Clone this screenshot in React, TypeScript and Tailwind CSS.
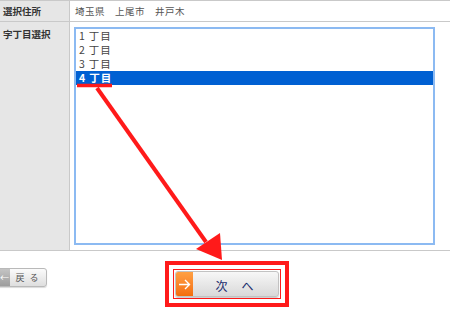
import React from "react";

const jp = { fontFamily: '"Noto Sans CJK JP", "Noto Sans", sans-serif' };

export default function App() {
  const items = ["1丁目", "2丁目", "3丁目", "4丁目"];
  const selected = 3;

  return (
    <div className="relative w-[450px] h-[325px] bg-white overflow-hidden" style={jp}>
      {/* Table */}
      <div className="border-t border-b border-[#c9c9c9]">
        <div className="grid grid-cols-[70px_1fr] h-[21px] border-b border-[#c9c9c9]">
          <div className="bg-[#e6e6e6] border-r border-[#c9c9c9] px-[3px] text-[9.5px] font-bold text-[#333] leading-[20px]">
            選択住所
          </div>
          <div className="pl-[5px] text-[9.5px] text-[#555] leading-[20px] tracking-[0.5px]">
            埼玉県　上尾市　井戸木
          </div>
        </div>
        <div className="grid grid-cols-[70px_1fr] h-[228px]">
          <div className="bg-[#e6e6e6] border-r border-[#c9c9c9] px-[3px] pt-[5px] text-[9.5px] font-bold text-[#333]">
            字丁目選択
          </div>
          <div className="pl-[4px] pr-[15px] pt-[5px] pb-[5px]">
            <div className="h-full border-2 border-[#8cbaf2] bg-white">
              {items.map((it, i) => (
                <div
                  key={it}
                  className={`h-[14px] pl-[3px] text-[10.5px] leading-[14px] tracking-[1px] overflow-hidden ${
                    i === selected ? "bg-[#0060d2] text-white font-bold" : "text-[#444]"
                  }`}
                >
                  <span className="mr-[3px]">{it.slice(0, 1)}</span>
                  {it.slice(1)}
                </div>
              ))}
            </div>
          </div>
        </div>
      </div>

      {/* Footer buttons */}
      <div className="relative h-[75px]">
        <button className="absolute left-[-4px] top-[17px] w-[51px] h-[19px] rounded-[3px] border border-[#b9b9b9] bg-gradient-to-b from-[#fbfbfb] to-[#dedede] flex items-center overflow-hidden shadow-[0_1px_1px_rgba(0,0,0,0.15)]">
          <span className="w-[13px] h-full bg-gradient-to-b from-[#c4c4c4] to-[#9d9d9d] text-white text-[9px] leading-[17px] text-right pr-[1px]">←</span>
          <span className="flex-1 text-[9px] text-[#555] tracking-[5px] pl-[3px]">戻る</span>
        </button>

        <div className="absolute left-[165px] top-[10px] w-[124px] h-[46px] border-[4px] border-[#ff1a1a] p-[4px]">
          <div className="w-full h-full border border-[#ff1a1a] p-[1px]">
            <button className="w-full h-full rounded-[3px] border border-[#c2c2c2] bg-gradient-to-b from-[#f7f7f7] to-[#d9d9d9] flex items-stretch overflow-hidden shadow-[0_1px_1px_rgba(0,0,0,0.2)]">
              <span className="w-[17px] bg-gradient-to-b from-[#ffa042] to-[#f36d0a] flex items-center justify-center">
                <svg width="13" height="11" viewBox="0 0 13 11" fill="none" stroke="white" strokeWidth="1.4">
                  <path d="M1 5.5H11.5M7 1l4.5 4.5L7 10" />
                </svg>
              </span>
              <span className="flex-1 text-[12px] font-normal text-[#1c2d6e] leading-[28px] tracking-[14px] pl-[12px]">次へ</span>
            </button>
          </div>
        </div>
      </div>

      {/* Annotation overlay */}
      <svg className="absolute left-0 top-0 pointer-events-none" width="450" height="325" viewBox="0 0 450 325">
        <line x1="77" y1="85.5" x2="112" y2="85.5" stroke="#ff1a1a" strokeWidth="3.5" />
        <line x1="97" y1="88" x2="206" y2="242" stroke="#ff1a1a" strokeWidth="4" />
        <polygon points="196,249 220,233 222,260" fill="#ff1a1a" />
      </svg>
    </div>
  );
}
